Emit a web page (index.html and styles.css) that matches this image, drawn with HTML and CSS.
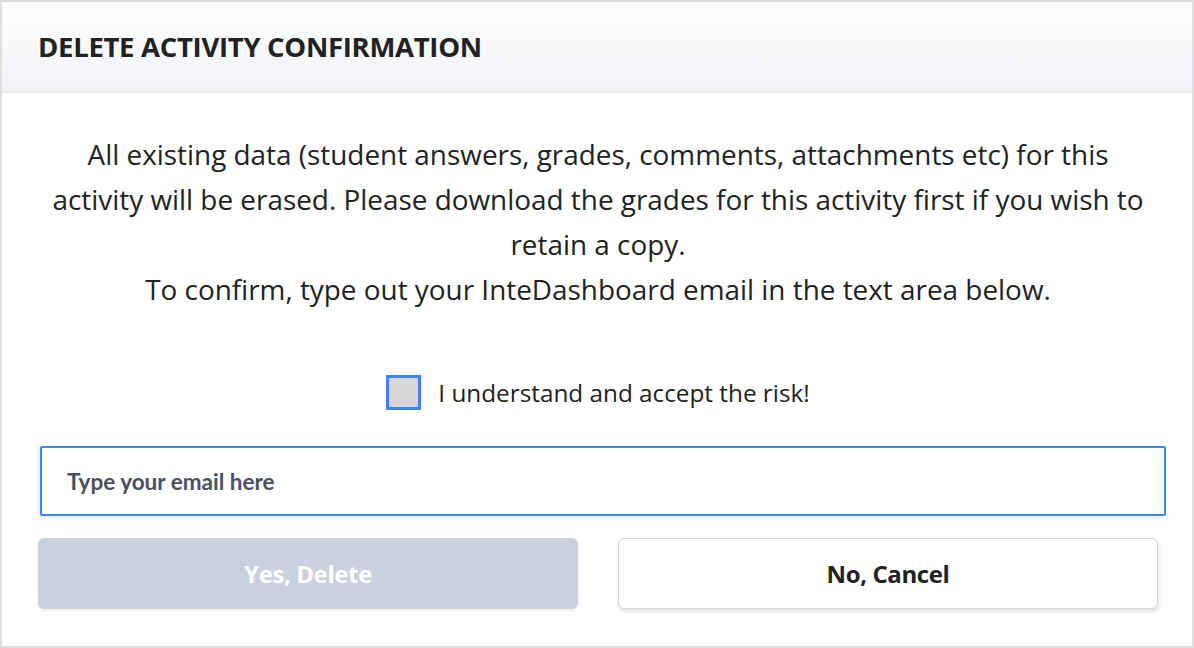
FILE: index.html
```html
<!DOCTYPE html>
<html lang="en">
<head>
  <meta charset="UTF-8" />
  <meta name="viewport" content="width=device-width, initial-scale=1.0"/>
  <title>Delete Activity</title>
  <link rel="stylesheet" href="styles.css">
</head>
<body>

  <!-- Delete Confirmation Modal -->
  <div class="modal">
    <div class="modal-header">
      <h2>DELETE ACTIVITY CONFIRMATION</h2>
    </div>

    <div class="modal-body">
      <p class="warning">
        All existing data (student answers, grades, comments, attachments etc) for this<br>
        activity will be erased. Please download the grades for this activity first if you wish to<br>
        retain a copy.<br>
        To confirm, type out your InteDashboard email in the text area below.
      </p>

      <label class="risk">
        <span class="checkbox"></span>
        <span>I understand and accept the risk!</span>
      </label>

      <input type="text" class="email-input" placeholder="Type your email here" />

      <div class="actions">
        <button class="btn btn-delete" disabled>Yes, Delete</button>
        <button class="btn btn-cancel">No, Cancel</button>
      </div>
    </div>
  </div>

</body>
</html>
```

FILE: styles.css
```css
* { box-sizing: border-box; }

body {
  margin: 0;
  font-family: "Open Sans", sans-serif;
  background-color: #fff;
  color: #222;
}

.modal {
  width: 1194px;
  height: 648px;
  border: 2px solid #dedede;
  background-color: #fff;
}

.modal-header {
  height: 91px;
  padding: 0 36px;
  display: flex;
  align-items: center;
  background: linear-gradient(#fff, #f1f2f6);
  border-bottom: 2px solid #e9e9ec;
}

.modal-header h2 {
  margin: 0;
  font-size: 27.5px;
  font-weight: 700;
  color: #222;
  letter-spacing: -0.3px;
}

.modal-body {
  padding: 0 34px 0 36px;
}

.warning {
  margin: 39px -10px 0;
  text-align: center;
  font-size: 27.9px;
  line-height: 45px;
  color: #222;
}

.risk {
  display: flex;
  justify-content: center;
  align-items: center;
  gap: 17px;
  margin-top: 63px;
  font-size: 24.3px;
  color: #222;
}

.checkbox {
  width: 35px;
  height: 35px;
  border: 3px solid #3d86f2;
  background-color: #d7d7d7;
}

.email-input {
  display: block;
  width: 1126px;
  height: 70px;
  margin: 36px 0 0 2px;
  padding: 0 25px;
  border: 2px solid #3b87ee;
  border-radius: 2px;
  font-family: Lato, sans-serif;
  font-size: 22.5px;
  box-shadow: -2px 2px 3px rgba(0, 0, 0, 0.08);
}

.email-input::placeholder {
  color: #4b5061;
  font-weight: 700;
}

.actions {
  display: flex;
  gap: 40px;
  margin-top: 22px;
}

.btn {
  width: 540px;
  height: 71px;
  border-radius: 6px;
  font-family: "Open Sans", sans-serif;
  font-size: 24px;
  font-weight: 700;
  letter-spacing: -0.4px;
}

.btn-delete {
  background-color: #c8d1dd;
  color: #fff;
  border: none;
  box-shadow: 0 2px 3px rgba(0, 0, 0, 0.08);
}

.btn-cancel {
  background-color: #fff;
  color: #222;
  border: 1px solid #d6d6d6;
  box-shadow: 1px 3px 4px rgba(0, 0, 0, 0.1);
  cursor: pointer;
}
```
